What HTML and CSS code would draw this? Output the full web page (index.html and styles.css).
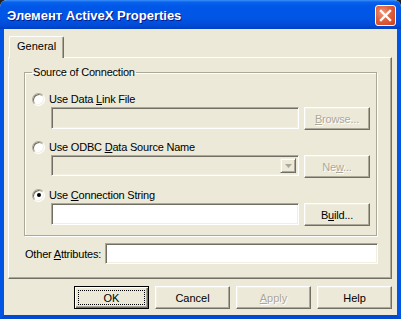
FILE: index.html
```html
<!DOCTYPE html>
<html lang="ru">
<head>
  <meta charset="UTF-8" />
  <title>Элемент ActiveX Properties</title>
  <link rel="stylesheet" href="styles.css">
</head>
<body>

  <div class="window">
    <div class="titlebar">
      <span class="title">Элемент ActiveX Properties</span>
      <span class="close">
        <svg width="13" height="13" viewBox="0 0 13 13">
          <path d="M2 2 L11 11 M11 2 L2 11" stroke="#fff" stroke-width="2.4" stroke-linecap="square" />
        </svg>
      </span>
    </div>

    <div class="frame">
      <div class="tabs">
        <div class="tab">General</div>
      </div>

      <div class="panel">
        <fieldset class="group">
          <legend>Source of Connection</legend>

          <div class="option">
            <div class="radio-row"><span class="radio"></span><span>Use Data <u>L</u>ink File</span></div>
            <div class="ctrl-row">
              <div class="field disabled"></div>
              <div class="btn disabled"><span><u>B</u>rowse...</span></div>
            </div>
          </div>

          <div class="option">
            <div class="radio-row"><span class="radio"></span><span>Use ODBC <u>D</u>ata Source Name</span></div>
            <div class="ctrl-row">
              <div class="field disabled combo">
                <span class="combo-btn">
                  <svg width="7" height="4" viewBox="0 0 7 4"><path d="M0 0 H7 L3.5 4 Z" fill="#aca899" /></svg>
                </span>
              </div>
              <div class="btn disabled"><span>Ne<u>w</u>...</span></div>
            </div>
          </div>

          <div class="option">
            <div class="radio-row"><span class="radio checked"></span><span>Use <u>C</u>onnection String</span></div>
            <div class="ctrl-row">
              <div class="field"></div>
              <div class="btn"><span>B<u>u</u>ild...</span></div>
            </div>
          </div>
        </fieldset>

        <div class="attr-row">
          <span class="attr-label">Other <u>A</u>ttributes:</span>
          <div class="field attr-field"></div>
        </div>
      </div>

      <div class="buttons">
        <div class="btn wide default"><span class="focus">OK</span></div>
        <div class="btn wide">Cancel</div>
        <div class="btn wide disabled"><span><u>A</u>pply</span></div>
        <div class="btn wide">Help</div>
      </div>
    </div>
  </div>

</body>
</html>
```

FILE: styles.css
```css
html, body {
  margin: 0;
  background: #222;
}

body {
  font-family: 'Liberation Sans', Arial, sans-serif;
  font-size: 11px;
  color: #000;
}

.window {
  width: 401px;
  height: 319px;
  border-radius: 7px 7px 0 0;
  overflow: hidden;
  background: #ece9d8;
}

.titlebar {
  height: 29px;
  box-sizing: border-box;
  display: flex;
  align-items: center;
  justify-content: space-between;
  padding: 1px 5px 0 7px;
  background: linear-gradient(#3c8ff8 0, #0a63ee 2px, #0058e8 6px, #0055e5 18px, #004cd8 25px, #0040c0 29px);
}

.title {
  color: #fff;
  font-weight: bold;
  font-size: 13px;
  text-shadow: 1px 1px #0a1883;
}

.close {
  width: 21px;
  height: 21px;
  box-sizing: border-box;
  border: 1px solid #fff;
  border-radius: 3px;
  background: radial-gradient(circle at 35% 35%, #ef9a7c 0, #e0603d 45%, #c8401c 100%);
  display: flex;
  align-items: center;
  justify-content: center;
}

.frame {
  height: 290px;
  box-sizing: border-box;
  border-left: 4px solid #0055e5;
  border-right: 4px solid #0055e5;
  border-bottom: 4px solid #0049d2;
  padding: 7px 5px 0 4px;
}

.tabs {
  display: flex;
  padding-left: 1px;
}

.tab {
  position: relative;
  height: 22px;
  box-sizing: border-box;
  margin-bottom: -1px;
  padding: 3px 7px 0 7px;
  background: #ece9d8;
  border-left: 1px solid #fff;
  border-top: 1px solid #fff;
  border-right: 1px solid #716f64;
  box-shadow: inset -1px 0 #aca899;
  border-radius: 2px 2px 0 0;
}

.panel {
  height: 222px;
  box-sizing: border-box;
  border-left: 1px solid #fff;
  border-top: 1px solid #fff;
  border-right: 1px solid #716f64;
  border-bottom: 1px solid #716f64;
  box-shadow: inset -1px -1px #aca899;
  padding-top: 8px;
  letter-spacing: -0.2px;
}

.group {
  margin: 0 14px 0 15px;
  padding: 12px 6px 9px 7px;
  border: 1px solid #aca899;
  box-shadow: inset 1px 1px #fff, 1px 1px #fff;
}

.group legend {
  padding: 0 1px;
  line-height: 13px;
}

.option + .option {
  margin-top: 9px;
}

.radio-row {
  display: flex;
  align-items: center;
  height: 16px;
  gap: 4px;
}

.radio {
  width: 13px;
  height: 13px;
  box-sizing: border-box;
  border-radius: 50%;
  border: 1px solid;
  border-color: #aca899 #fff #fff #aca899;
  box-shadow: inset 1px 1px #716f64, inset -1px -1px #f1efe2;
  background: #fff;
  display: flex;
  align-items: center;
  justify-content: center;
}

.radio.checked::after {
  content: '';
  width: 4px;
  height: 4px;
  border-radius: 50%;
  background: #000;
}

.ctrl-row {
  display: flex;
  gap: 5px;
  margin-left: 19px;
  height: 23px;
}

.field {
  flex: 1;
  height: 22px;
  box-sizing: border-box;
  border: 1px solid;
  border-color: #aca899 #fff #fff #aca899;
  box-shadow: inset 1px 1px #716f64, inset -1px -1px #f1efe2;
  background: #fff;
}

.field.disabled {
  background: #ece9d8;
}

.combo {
  height: 21px;
  display: flex;
  justify-content: flex-end;
  padding: 2px;
}

.combo-btn {
  width: 16px;
  box-sizing: border-box;
  border: 1px solid;
  border-color: #f1efe2 #716f64 #716f64 #f1efe2;
  box-shadow: inset 1px 1px #fff, inset -1px -1px #aca899;
  background: #ece9d8;
  display: flex;
  align-items: center;
  justify-content: center;
}

.btn {
  width: 66px;
  height: 23px;
  box-sizing: border-box;
  border: 1px solid;
  border-color: #fff #716f64 #716f64 #fff;
  box-shadow: inset -1px -1px #aca899, inset 1px 1px #f1efe2;
  background: #ece9d8;
  display: flex;
  align-items: center;
  justify-content: center;
}

.btn.disabled {
  color: #aca899;
  text-shadow: 1px 1px #fff;
}

.attr-row {
  display: flex;
  align-items: center;
  justify-content: space-between;
  margin: 7px 13px 0 16px;
}

.attr-field {
  flex: none;
  width: 273px;
  height: 21px;
}

.buttons {
  display: flex;
  justify-content: flex-end;
  gap: 6px;
  margin-top: 7px;
}

.btn.wide {
  width: 75px;
}

.btn.default {
  border: 1px solid #000;
  box-shadow: inset 1px 1px #fff, inset -1px -1px #716f64, inset -2px -2px #aca899;
  padding: 3px;
}

.focus {
  flex: 1;
  align-self: stretch;
  display: flex;
  align-items: center;
  justify-content: center;
  border: 1px dotted #000;
}
```
